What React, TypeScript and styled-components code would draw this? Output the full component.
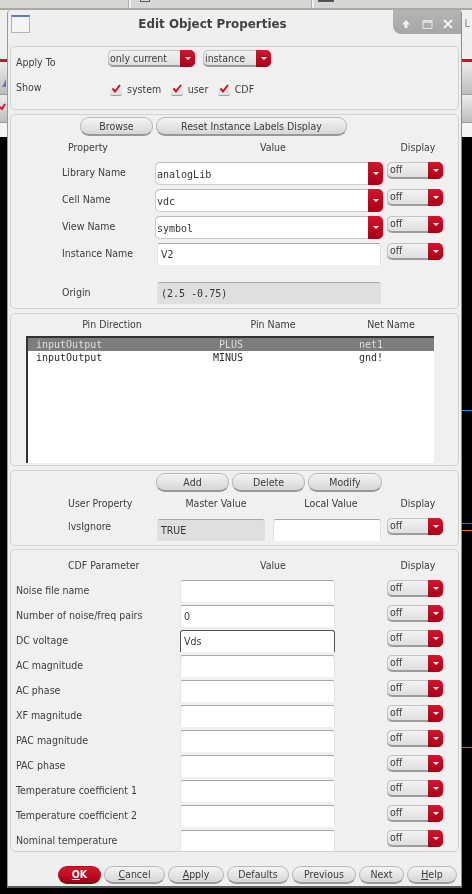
import React from 'react';
import styled, { createGlobalStyle } from 'styled-components';

const Global = createGlobalStyle`
  html, body { margin: 0; padding: 0; background: #000; }
  body { font-family: "DejaVu Sans Condensed", "DejaVu Sans", sans-serif; }
`;

const Page = styled.div`
  position: relative;
  width: 472px;
  height: 894px;
  overflow: hidden;
  background: #000;
  filter: blur(0.4px);
`;

/* the main window behind the dialog */
const TabStrip = styled.div`
  display: flex;
  height: 8px;
  background: #d6d6d4;
  border-bottom: 2px solid #a9a9a7;
`;

const TabEnd = styled.div<{ $w: number }>`
  display: flex;
  width: ${({ $w }) => $w}px;
  height: 100%;
  border-right: 2px solid #efefef;
  box-shadow: inset -1px 0 0 #b0b0ae;
`;

const TabGlyph = styled.span<{ $ml: number; $w: number; $solid?: boolean }>`
  box-sizing: border-box;
  width: ${({ $w }) => $w}px;
  height: 2px;
  margin-left: ${({ $ml }) => $ml}px;
  background: ${({ $solid }) => ($solid ? '#4a4a4a' : 'transparent')};
  border: 1px solid #5a5a5a;
  border-top: 0;
`;

const MenuBand = styled.div`
  height: 49px;
  background: #efefef;
  text-align: right;
  padding-right: 2px;
  color: #8a8a8a;
  font-size: 11px;
  line-height: 28px;
`;

const RedLine = styled.div`
  height: 3px;
  background: #d20f28;
`;

const ToolBand = styled.div<{ $h: number }>`
  height: ${({ $h }) => $h}px;
  background: linear-gradient(#ececec, #bcbcbc);
  border-bottom: 1px solid #9a9a9a;
`;

const WhiteBand = styled.div`
  height: 14px;
  background: #f4f4f4;
`;

const CanvasLine = styled.div<{ $y: number; $c: string }>`
  position: absolute;
  left: 462px;
  right: 0;
  top: ${({ $y }) => $y}px;
  height: 1px;
  background: ${({ $c }) => $c};
`;

const StrayIcon = styled.svg`
  position: absolute;
  left: 0;
  top: 74px;
`;

/* dialog */
const Dialog = styled.div`
  position: absolute;
  left: 7px;
  top: 10px;
  width: 455px;
  height: 878px;
  box-sizing: border-box;
  background: #efefef;
  border-left: 1px solid #9a9a9a;
  border-right: 1px solid #8c8c8c;
  border-bottom: 2px solid #5a5a5a;
  border-radius: 4px 4px 0 0;
  color: #3c3c3c;
  font-size: 10.5px;
  padding: 0 2px;
`;

const TitleBar = styled.div`
  display: flex;
  align-items: flex-start;
  height: 26px;
  margin: 0 -2px 10px;
`;

const WinIcon = styled.div`
  flex: none;
  width: 17px;
  height: 15px;
  margin: 5px 0 0 3px;
  background: #f4f4f4;
  border: 1px solid #b4b4b4;
  border-top: 2px solid #5c7fb4;
`;

const Title = styled.div`
  flex: 1;
  text-align: center;
  font-family: "DejaVu Sans", sans-serif;
  font-weight: 700;
  font-size: 11.9px;
  line-height: 28px;
  color: #3e4244;
  padding-left: 2px;
`;

const WinButtons = styled.div`
  flex: none;
  width: 68px;
  height: 24px;
  box-sizing: border-box;
  display: flex;
  align-items: center;
  gap: 9px;
  padding: 3px 0 0 7px;
  background: linear-gradient(#b4b4b4, #a6a6a6);
  border-radius: 0 0 0 8px;
`;

const Panel = styled.section<{ $h: number; $gap?: number }>`
  box-sizing: border-box;
  height: ${({ $h }) => $h}px;
  margin-bottom: ${({ $gap = 4 }) => $gap}px;
  background: #f0f0f0;
  border: 1px solid #d2d2d2;
  border-radius: 5px;
  overflow: hidden;
`;

const ApplyRow = styled.div<{ $top: number; $h: number }>`
  display: flex;
  align-items: center;
  height: ${({ $h }) => $h}px;
  margin-top: ${({ $top }) => $top}px;
  padding-left: 5px;
`;

const ApplyLabel = styled.div<{ $lift?: number }>`
  width: 92px;
  flex: none;
  margin-top: ${({ $lift = 0 }) => $lift}px;
`;

const Select = styled.div<{ $w: number; $ml?: number }>`
  flex: none;
  box-sizing: border-box;
  display: flex;
  width: ${({ $w }) => $w}px;
  height: 17px;
  margin-left: ${({ $ml = 0 }) => $ml}px;
  background: linear-gradient(#f4f4f4, #dcdcdc);
  box-shadow: inset 0 1px 0 #c4c4c4, inset 1px 0 0 #c4c4c4, inset 0 -2px 0 #9c9c9c;
  border-radius: 5px;
  overflow: hidden;
  line-height: 17px;
  padding-left: 2px;
`;

const SelectText = styled.span`
  flex: 1;
  min-width: 0;
`;

const RedArrow = styled.span<{ $w?: number }>`
  flex: none;
  display: flex;
  align-items: center;
  justify-content: center;
  width: ${({ $w = 15 }) => $w}px;
  background: linear-gradient(#d4142c, #a80018);
  &::after {
    content: '';
    border-left: 3.5px solid transparent;
    border-right: 3.5px solid transparent;
    border-top: 3.5px solid #fff;
  }
`;

const OffBox = styled(Select)<{ $up?: number }>`
  width: 56px;
  margin-top: ${({ $up = 0 }) => -$up}px;
  line-height: 15px;
  padding-left: 3px;
`;

const Check = styled.label`
  display: flex;
  align-items: center;
  gap: 5px;
  margin-right: 7.5px;
`;

const CheckBox = styled.span`
  display: block;
  width: 12px;
  height: 12px;
  background: linear-gradient(#f6f6f6, #dedede);
  border-bottom: 1px solid #a0a0a0;
  border-radius: 2px;
  margin-left: 2px;
`;

const BtnRow = styled.div<{ $left: number }>`
  display: flex;
  gap: 3px;
  padding: 2px 0 0 ${({ $left }) => $left}px;
`;

const Btn = styled.button<{ $w: number; $primary?: boolean }>`
  flex: none;
  box-sizing: border-box;
  width: ${({ $w }) => $w}px;
  height: 19px;
  padding: 0;
  font: inherit;
  color: ${({ $primary }) => ($primary ? '#fff' : '#3c3c3c')};
  font-weight: ${({ $primary }) => ($primary ? 700 : 400)};
  background: ${({ $primary }) =>
    $primary
      ? 'linear-gradient(#d8162e, #a80018)'
      : 'linear-gradient(#f4f4f4, #d6d6d6)'};
  border: 1px solid ${({ $primary }) => ($primary ? '#b00c20' : '#b8b8b8')};
  border-bottom: 2px solid ${({ $primary }) => ($primary ? '#8c0012' : '#989898')};
  border-radius: 9px;
`;

const HeadRow = styled.div<{ $cols: string; $left: number; $top: number }>`
  display: grid;
  grid-template-columns: ${({ $cols }) => $cols};
  padding-left: ${({ $left }) => $left}px;
  margin-top: ${({ $top }) => $top}px;
  line-height: 14px;
`;

const HeadCell = styled.div<{ $start?: boolean }>`
  text-align: ${({ $start }) => ($start ? 'left' : 'center')};
  white-space: nowrap;
`;

const PropRows = styled.div`
  display: grid;
  grid-template-columns: 89px 228px 56px;
  column-gap: 4px;
  row-gap: 4px;
  grid-auto-rows: 23px;
  padding: 8px 0 0 51px;
`;

const RowLabel = styled.div<{ $lh?: number }>`
  line-height: ${({ $lh = 21 }) => $lh}px;
  white-space: nowrap;
`;

const Combo = styled.div`
  box-sizing: border-box;
  display: flex;
  height: 23px;
  background: #fff;
  box-shadow: inset 0 1px 0 #bcbcbc, inset 1px 0 0 #cccccc, inset 0 -1px 0 #cccccc;
  border-radius: 5px;
  overflow: hidden;
`;

const ComboText = styled.span`
  flex: 1;
  font-family: "DejaVu Sans Mono", monospace;
  font-size: 10px;
  line-height: 25px;
  padding-left: 2px;
  color: #333;
`;

const Field = styled.div<{ $w?: number; $ml?: number; $grey?: boolean; $focus?: boolean; $mono?: boolean }>`
  box-sizing: border-box;
  width: ${({ $w }) => ($w ? `${$w}px` : 'auto')};
  height: 22px;
  margin-left: ${({ $ml = 0 }) => $ml}px;
  background: ${({ $grey }) => ($grey ? '#dfdfdf' : '#fff')};
  border-top: ${({ $focus }) => ($focus ? '1px solid #555' : '1px solid #a6a6a6')};
  border-left: ${({ $focus }) => ($focus ? '1px solid #555' : '1px solid #e2e2e2')};
  border-right: ${({ $focus }) => ($focus ? '1px solid #555' : '1px solid #e2e2e2')};
  border-radius: 3px 3px 0 0;
  font-family: ${({ $mono }) => ($mono ? '"DejaVu Sans Mono", monospace' : 'inherit')};
  font-size: ${({ $mono }) => ($mono ? 10 : 10.5)}px;
  line-height: 21px;
  padding-left: 3px;
  color: #333;
`;

const OriginRow = styled.div`
  display: grid;
  grid-template-columns: 89px 224px;
  column-gap: 6px;
  padding: 16px 0 0 51px;
`;

const List = styled.div`
  box-sizing: border-box;
  width: 408px;
  height: 127px;
  margin: 5px 0 0 15px;
  background: #fff;
  border-top: 2px solid #333;
  border-left: 2px solid #333;
  font-family: "DejaVu Sans Mono", monospace;
  font-size: 10px;
`;

const ListRow = styled.div<{ $sel?: boolean }>`
  display: grid;
  grid-template-columns: 134px 73px 1fr;
  height: 13px;
  line-height: 13px;
  padding-left: 8px;
  background: ${({ $sel }) => ($sel ? '#7d7d7d' : 'transparent')};
  color: ${({ $sel }) => ($sel ? '#dedede' : '#2a2a2a')};
`;

const PinName = styled.span`
  text-align: right;
`;

const NetName = styled.span`
  padding-left: 116px;
`;

const UserRow = styled.div`
  display: grid;
  grid-template-columns: 89px 108px 116px 62px;
  padding: 9px 0 0 57px;
`;

const CdfRows = styled.div`
  display: grid;
  grid-template-columns: 164px 155px 108px;
  grid-auto-rows: 23px;
  row-gap: 2px;
  padding: 8px 0 0 5px;
`;

const Footer = styled.div`
  display: flex;
  justify-content: flex-end;
  gap: 3px;
  margin-top: 14px;
  padding-right: 2px;
`;

const FootBtn = styled(Btn)`
  height: 18px;
  line-height: 15px;
`;

const Off = ({ up, ml }: { up?: number; ml?: number }) => (
  <OffBox $w={56} $up={up} $ml={ml}>
    <SelectText>off</SelectText>
    <RedArrow />
  </OffBox>
);

const CheckItem = ({ label }: { label: string }) => (
  <Check>
    <CheckBox>
      <svg width="12" height="12" viewBox="0 0 12 12">
        <path d="M2.5 5.5l2.5 3L10 2" fill="none" stroke="#d01028" strokeWidth="2" />
      </svg>
    </CheckBox>
    {label}
  </Check>
);

const properties = [
  ['Library Name', 'analogLib'],
  ['Cell Name', 'vdc'],
  ['View Name', 'symbol'],
];

const cdf = [
  ['Noise file name', ''],
  ['Number of noise/freq pairs', '0'],
  ['DC voltage', 'Vds'],
  ['AC magnitude', ''],
  ['AC phase', ''],
  ['XF magnitude', ''],
  ['PAC magnitude', ''],
  ['PAC phase', ''],
  ['Temperature coefficient 1', ''],
  ['Temperature coefficient 2', ''],
  ['Nominal temperature', ''],
];

export default function App() {
  return (
    <Page>
      <Global />
      <TabStrip>
        <TabEnd $w={129} />
        <TabEnd $w={181}>
          <TabGlyph $ml={9} $w={10} />
        </TabEnd>
        <TabGlyph $ml={4} $w={16} $solid />
      </TabStrip>
      <MenuBand>L</MenuBand>
      <RedLine />
      <ToolBand $h={32} />
      <ToolBand $h={27} />
      <WhiteBand />
      <StrayIcon width="7" height="40" viewBox="0 0 7 40">
        <path d="M2 13l4-8v8z" fill="#6a78b8" />
        <path d="M0 33l2 2 3-5" fill="none" stroke="#d01028" strokeWidth="2" />
      </StrayIcon>
      <CanvasLine $y={410} $c="#3a8fd0" />
      <CanvasLine $y={523} $c="#9a5a18" />
      <CanvasLine $y={530} $c="#e07a1c" />
      <CanvasLine $y={747} $c="#3a8fd0" />

      <Dialog>
        <TitleBar>
          <WinIcon />
          <Title>Edit Object Properties</Title>
          <WinButtons>
            <svg width="12" height="12" viewBox="0 0 12 12">
              <path d="M6 2L2 6.5h2.5V10h3V6.5H10z" fill="#f2f2f2" />
            </svg>
            <svg width="12" height="12" viewBox="0 0 12 12">
              <path d="M2 2.5h9v8H2z" fill="none" stroke="#e8e8e8" strokeWidth="1" />
              <path d="M2 4h9" stroke="#e8e8e8" strokeWidth="1.5" />
            </svg>
            <svg width="12" height="12" viewBox="0 0 12 12">
              <path d="M2 2l8 8M10 2l-8 8" stroke="#f2f2f2" strokeWidth="2" />
            </svg>
          </WinButtons>
        </TitleBar>

        <Panel $h={64}>
          <ApplyRow $top={3} $h={17}>
            <ApplyLabel $lift={6}>Apply To</ApplyLabel>
            <Select $w={87}>
              <SelectText>only current</SelectText>
              <RedArrow />
            </Select>
            <Select $w={68} $ml={8}>
              <SelectText>instance</SelectText>
              <RedArrow />
            </Select>
          </ApplyRow>
          <ApplyRow $top={12} $h={20}>
            <ApplyLabel $lift={-5}>Show</ApplyLabel>
            <CheckItem label="system" />
            <CheckItem label="user" />
            <CheckItem label="CDF" />
          </ApplyRow>
        </Panel>

        <Panel $h={195}>
          <BtnRow $left={69}>
            <Btn $w={73}>Browse</Btn>
            <Btn $w={191}>Reset Instance Labels Display</Btn>
          </BtnRow>
          <HeadRow $cols="82px 246px 44px" $left={57} $top={4}>
            <HeadCell $start>Property</HeadCell>
            <HeadCell>Value</HeadCell>
            <HeadCell>Display</HeadCell>
          </HeadRow>
          <PropRows>
            {properties.map(([name, value]) => (
              <React.Fragment key={name}>
                <RowLabel>{name}</RowLabel>
                <Combo>
                  <ComboText>{value}</ComboText>
                  <RedArrow />
                </Combo>
                <Off />
              </React.Fragment>
            ))}
            <RowLabel>Instance Name</RowLabel>
            <Field $w={224} $ml={2}>V2</Field>
            <Off />
          </PropRows>
          <OriginRow>
            <RowLabel $lh={21}>Origin</RowLabel>
            <Field $grey $mono>(2.5 -0.75)</Field>
          </OriginRow>
        </Panel>

        <Panel $h={153}>
          <HeadRow $cols="172px 150px 86px" $left={15} $top={3}>
            <HeadCell>Pin Direction</HeadCell>
            <HeadCell>Pin Name</HeadCell>
            <HeadCell>Net Name</HeadCell>
          </HeadRow>
          <List>
            <ListRow $sel>
              <span>inputOutput</span>
              <PinName>PLUS</PinName>
              <NetName>net1</NetName>
            </ListRow>
            <ListRow>
              <span>inputOutput</span>
              <PinName>MINUS</PinName>
              <NetName>gnd!</NetName>
            </ListRow>
          </List>
        </Panel>

        <Panel $h={76} $gap={3}>
          <BtnRow $left={145}>
            <Btn $w={73}>Add</Btn>
            <Btn $w={73}>Delete</Btn>
            <Btn $w={74}>Modify</Btn>
          </BtnRow>
          <HeadRow $cols="82px 132px 98px 76px" $left={57} $top={4}>
            <HeadCell $start>User Property</HeadCell>
            <HeadCell>Master Value</HeadCell>
            <HeadCell>Local Value</HeadCell>
            <HeadCell>Display</HeadCell>
          </HeadRow>
          <UserRow>
            <RowLabel $lh={15}>lvsIgnore</RowLabel>
            <Field $grey>TRUE</Field>
            <Field $ml={8} />
            <Off up={1} ml={6} />
          </UserRow>
        </Panel>

        <Panel $h={303} $gap={0}>
          <HeadRow $cols="82px 246px 44px" $left={57} $top={8}>
            <HeadCell $start>CDF Parameter</HeadCell>
            <HeadCell>Value</HeadCell>
            <HeadCell>Display</HeadCell>
          </HeadRow>
          <CdfRows>
            {cdf.map(([name, value]) => (
              <React.Fragment key={name}>
                <RowLabel $lh={20}>{name}</RowLabel>
                <Field $focus={name === 'DC voltage'}>{value}</Field>
                <Off ml={52} />
              </React.Fragment>
            ))}
          </CdfRows>
        </Panel>

        <Footer>
          <FootBtn $w={43} $primary><u>O</u>K</FootBtn>
          <FootBtn $w={61}><u>C</u>ancel</FootBtn>
          <FootBtn $w={56}><u>A</u>pply</FootBtn>
          <FootBtn $w={62}>Defaults</FootBtn>
          <FootBtn $w={64}>Previous</FootBtn>
          <FootBtn $w={45}>Next</FootBtn>
          <FootBtn $w={50}><u>H</u>elp</FootBtn>
        </Footer>
      </Dialog>
    </Page>
  );
}
